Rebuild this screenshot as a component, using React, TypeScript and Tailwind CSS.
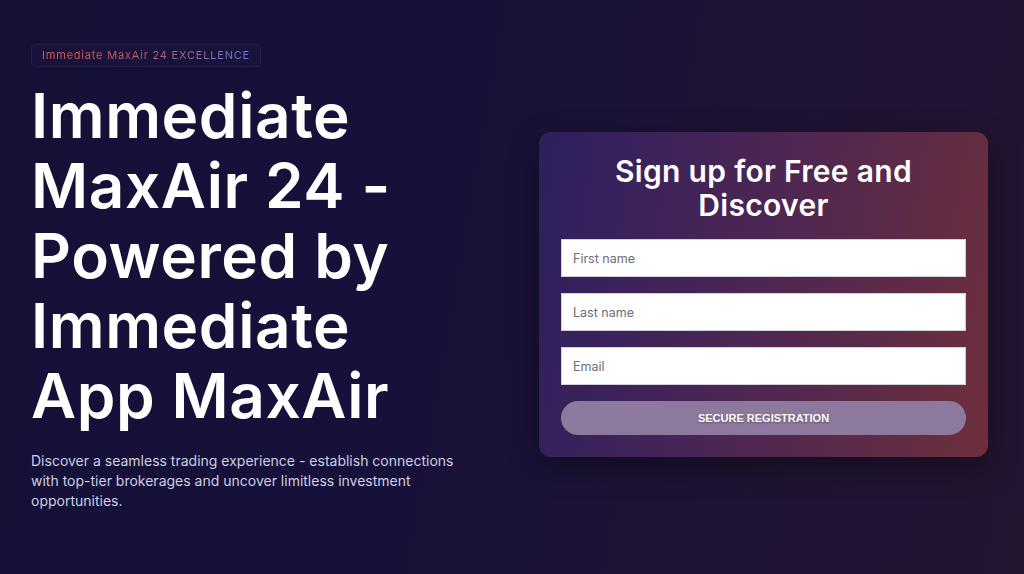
import React from "react";

export default function App() {
  const font = { fontFamily: "Inter, 'Noto Sans', sans-serif" };
  return (
    <div
      className="relative h-[574px] w-full overflow-hidden bg-[linear-gradient(100deg,#141036_0%,#16113a_40%,#1f1333_70%,#231430_100%)]"
      style={font}
    >
      <div className="flex items-start pl-[31px] pr-[36px] pt-[44px]">
        <div className="flex w-[480px] flex-col items-start">
          <div className="flex h-[23px] items-center rounded-[4px] border border-[#241f48] bg-[#17133a] px-[10px]">
            <span className="bg-[linear-gradient(90deg,#e05a4c_0%,#c5566a_45%,#5b7fd8_100%)] bg-clip-text text-[11px] tracking-[0.8px] text-transparent">
              Immediate MaxAir 24 EXCELLENCE
            </span>
          </div>
          <h1 className="mt-[14px] text-[62px] font-semibold leading-[70px] tracking-[0.6px] text-white">
            Immediate
            <br />
            MaxAir 24 -
            <br />
            Powered by
            <br />
            Immediate
            <br />
            App MaxAir
          </h1>
          <p className="mt-[20px] w-[445px] text-[14px] leading-[20px] text-[#cfcde0]">
            Discover a seamless trading experience - establish connections with top-tier brokerages and uncover limitless investment opportunities.
          </p>
        </div>
        <div className="ml-auto mt-[88px] w-[449px] rounded-[12px] bg-[linear-gradient(100deg,#2d1f5e_0%,#442458_35%,#5a2a4a_70%,#6e2f3c_100%)] px-[22px] pb-[22px] pt-[22px] shadow-[0_10px_30px_rgba(0,0,0,0.35)]">
          <h2 className="text-center text-[30px] font-semibold leading-[34px] tracking-[0.3px] text-white">
            Sign up for Free and
            <br />
            Discover
          </h2>
          <div className="mt-[17px] flex flex-col gap-[16px]">
            <input
              className="h-[38px] w-full border border-[#d0d0d8] bg-white px-[11px] text-[12.5px] text-[#333] placeholder:text-[#6b6b78] outline-none"
              placeholder="First name"
            />
            <input
              className="h-[38px] w-full border border-[#d0d0d8] bg-white px-[11px] text-[12.5px] text-[#333] placeholder:text-[#6b6b78] outline-none"
              placeholder="Last name"
            />
            <input
              className="h-[38px] w-full border border-[#d0d0d8] bg-white px-[11px] text-[12.5px] text-[#333] placeholder:text-[#6b6b78] outline-none"
              placeholder="Email"
            />
            <button
              className="h-[34px] w-full rounded-full bg-[#8d789e] text-[11px] font-bold text-white [text-shadow:0_1px_2px_rgba(0,0,0,0.35)]"
              style={{ fontFamily: "'Liberation Sans', Arial, sans-serif" }}
            >
              SECURE REGISTRATION
            </button>
          </div>
        </div>
      </div>
    </div>
  );
}
